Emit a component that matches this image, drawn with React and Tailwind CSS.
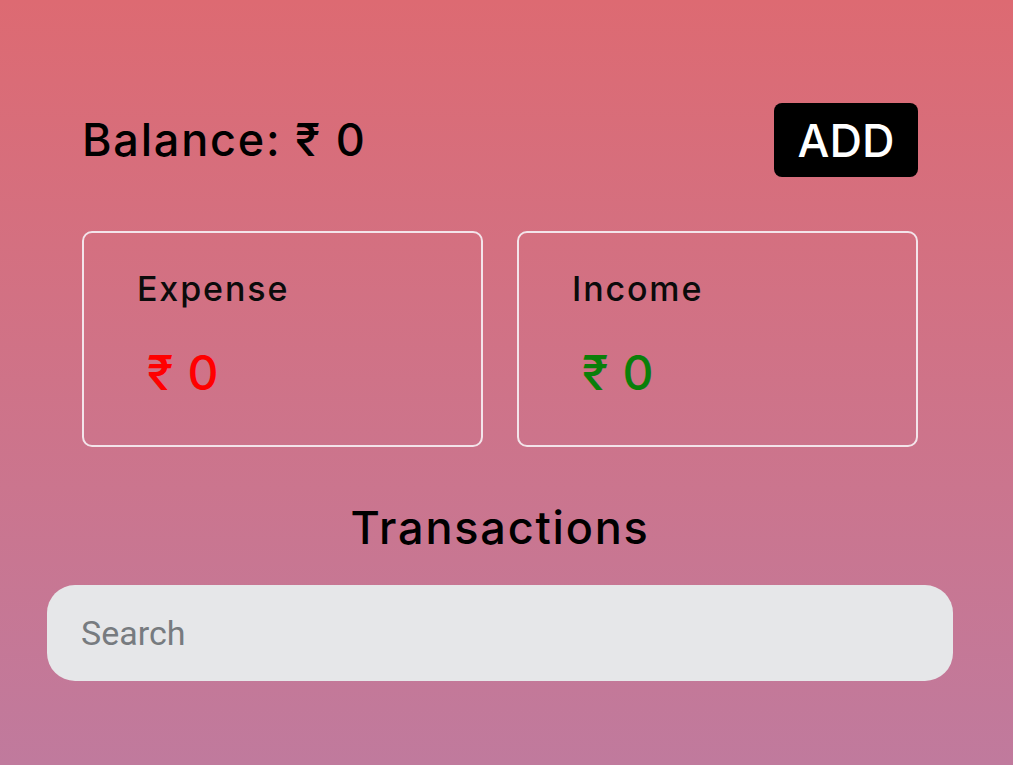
import React from 'react';

const SummaryCard = ({ label, amount, color }) => (
  <div className="flex-1 h-[216px] rounded-[10px] border-2 border-[#f3e4ea] pt-[36px] pl-[53px]">
    <p className="text-[34px] leading-[40px] font-medium tracking-[0.055em] text-[#0b0b0b]">{label}</p>
    <p className={`mt-[37px] ml-[10px] text-[48px] leading-[54px] font-medium ${color}`}>
      ₹<span className="ml-[14px]">{amount}</span>
    </p>
  </div>
);

export default function App() {
  return (
    <div
      className="w-full h-[765px] bg-linear-to-b from-[#dd6a72] to-[#c07a9d] text-black"
      style={{ fontFamily: 'Inter, "Noto Sans", sans-serif' }}
    >
      <div className="w-[1000px] pt-[103px]">
        {/* balance + add */}
        <div className="mx-[82px] flex items-center justify-between">
          <h1 className="text-[45px] leading-[54px] font-medium tracking-[0.04em]">Balance: ₹ 0</h1>
          <button className="w-[144px] h-[74px] rounded-[8px] bg-black text-white text-[45px] leading-none font-medium">
            ADD
          </button>
        </div>

        {/* expense / income */}
        <div className="mx-[82px] mt-[54px] flex gap-[34px]">
          <SummaryCard label="Expense" amount="0" color="text-[#ff0000]" />
          <SummaryCard label="Income" amount="0" color="text-[#0a7f0a]" />
        </div>

        <h2 className="mt-[54px] text-center text-[45px] leading-[54px] font-medium tracking-[0.04em]">Transactions</h2>

        <div className="mx-[47px] mt-[30px]">
          <input
            type="text"
            placeholder="Search"
            className="w-full h-[96px] rounded-[28px] bg-[#e6e7e9] px-[34px] text-[34px] text-[#333] placeholder:text-[#777b7f] outline-none"
            style={{ fontFamily: 'Roboto, sans-serif' }}
          />
        </div>
      </div>
    </div>
  );
}
